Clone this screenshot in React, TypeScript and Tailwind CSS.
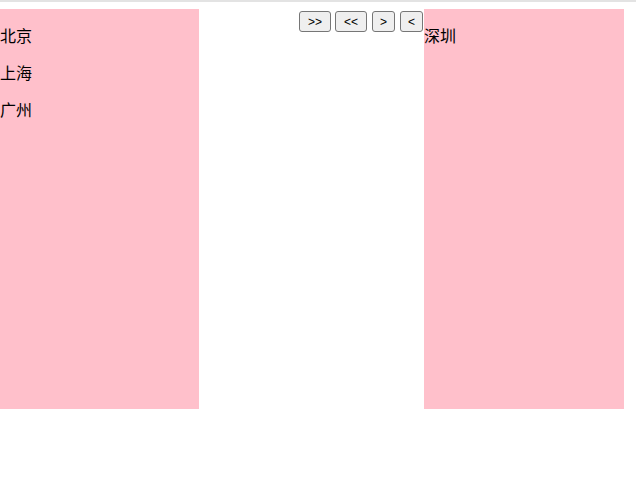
import React from 'react';

const leftCities = ['北京', '上海', '广州'];
const rightCities = ['深圳'];

const buttons = [
  { label: '>>', w: 'w-[32px]', ml: 'ml-0' },
  { label: '<<', w: 'w-[32px]', ml: 'ml-[4px]' },
  { label: '>', w: 'w-[23px]', ml: 'ml-[5px]' },
  { label: '<', w: 'w-[23px]', ml: 'ml-[5px]' },
];

const CityBox = ({ items, w }: { items: string[]; w: string }) => (
  <div className={`${w} h-[400px] mt-[7px] bg-[#ffc0cb] pt-[16px] shrink-0`}>
    {items.map((city) => (
      <p key={city} className="text-[16px] leading-[21px] mb-[16px] text-black">
        {city}
      </p>
    ))}
  </div>
);

export default function App() {
  return (
    <div
      className="w-[636px] h-[500px] bg-white"
      style={{ fontFamily: '"Noto Sans CJK SC", "Liberation Sans", sans-serif' }}
    >
      <div className="h-[2px] bg-[#e3e3e3]" />
      <div className="flex items-start">
        <CityBox items={leftCities} w="w-[199px]" />
        <div className="w-[100px] shrink-0" />
        <div className="flex items-center mt-[9px] w-[125px] shrink-0">
          {buttons.map((b) => (
            <button
              key={b.label}
              className={`${b.w} ${b.ml} h-[21px] border border-[#767676] bg-[#efefef] rounded-[3px] text-[12px] text-black flex items-center justify-center shrink-0`}
              style={{ fontFamily: '"Liberation Sans", Arial, sans-serif' }}
            >
              {b.label}
            </button>
          ))}
        </div>
        <CityBox items={rightCities} w="w-[200px]" />
      </div>
    </div>
  );
}
